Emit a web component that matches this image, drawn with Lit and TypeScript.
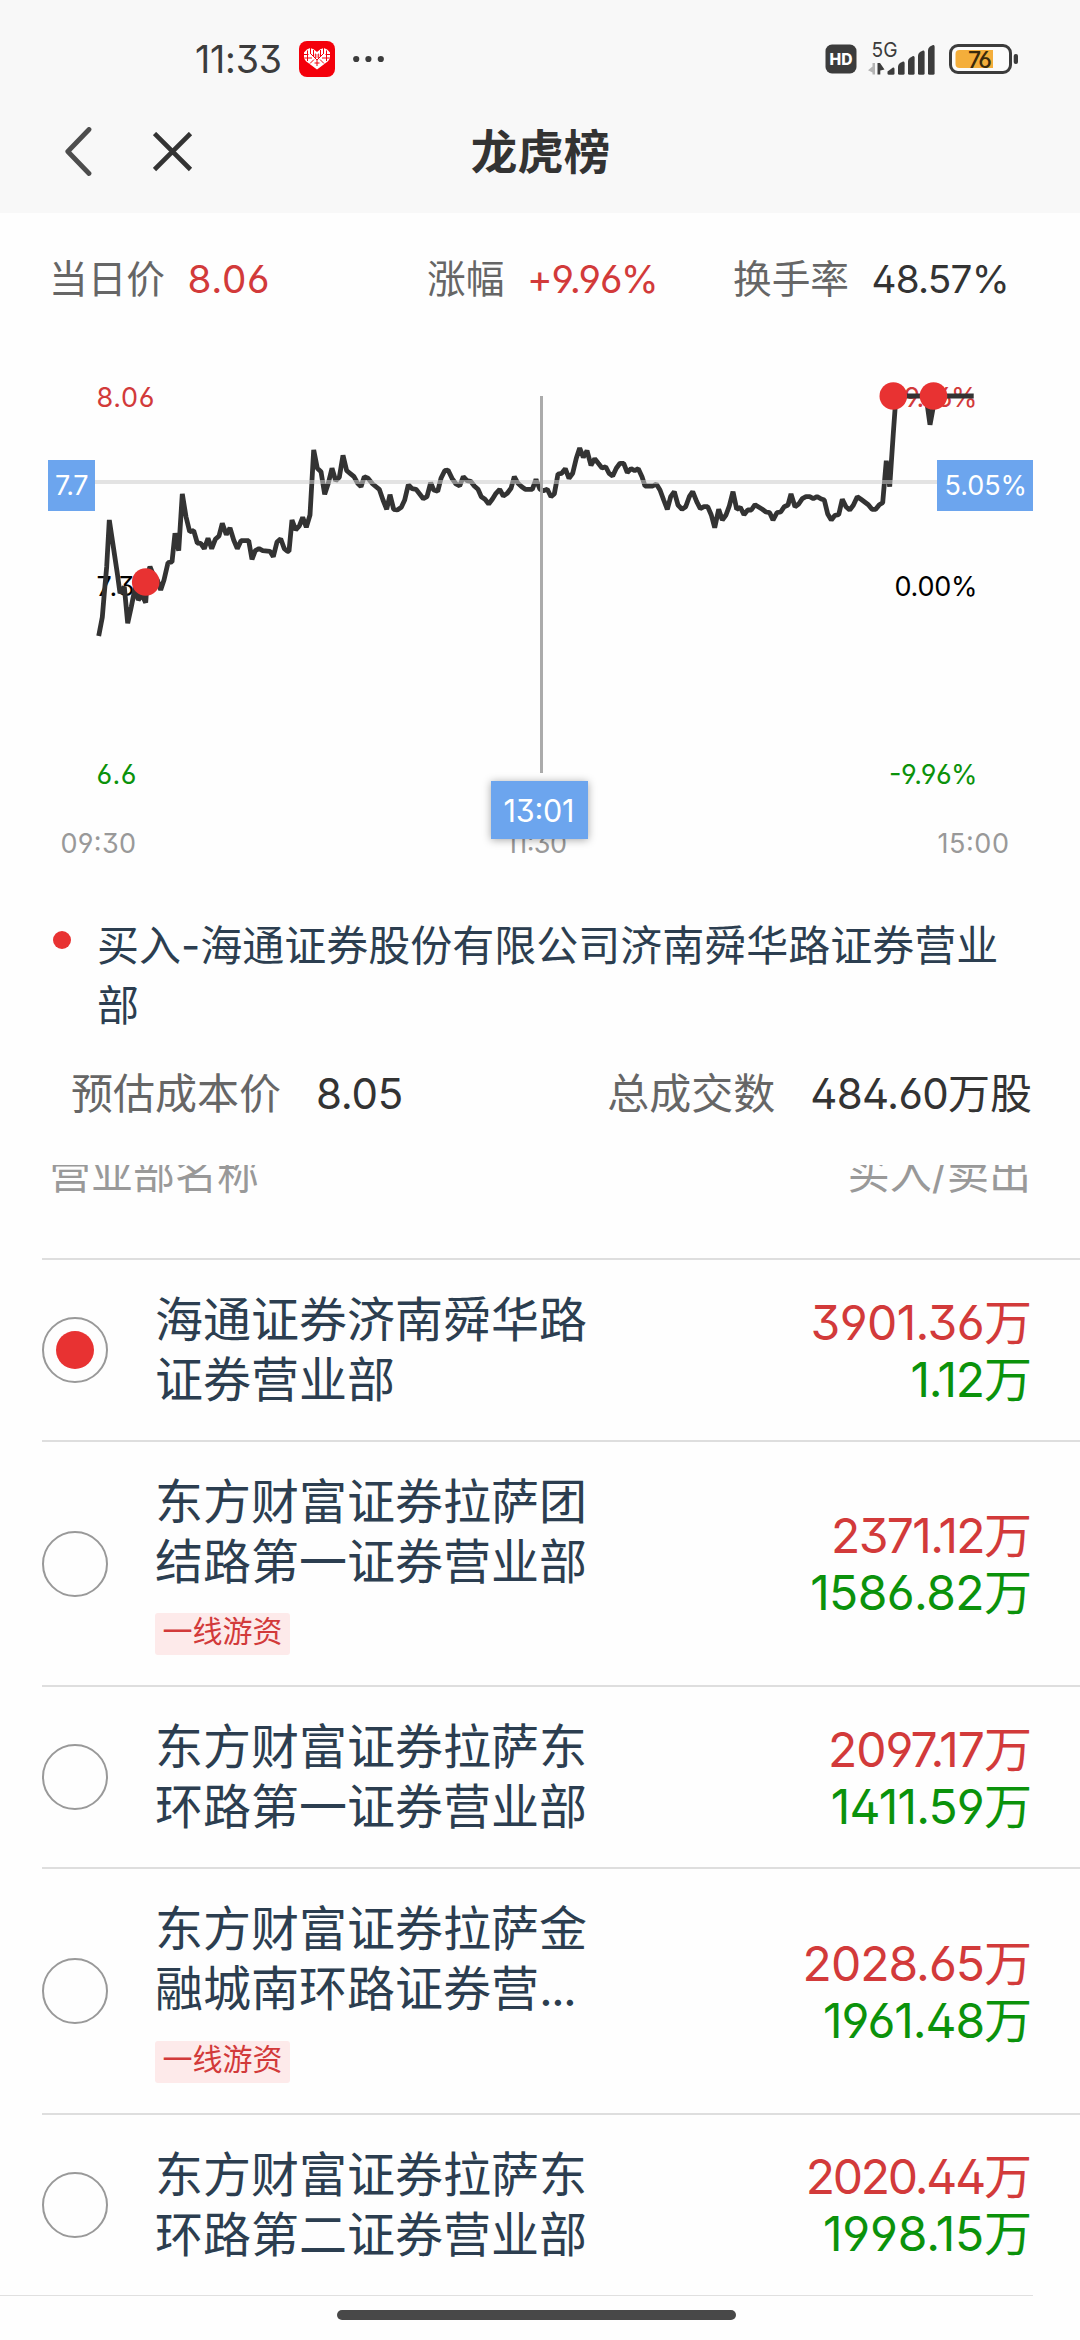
import { LitElement, html, css, svg, nothing } from "lit";
import { customElement, property } from "lit/decorators.js";

interface Amount {
  value: string;
  tracking: number;
}

interface Seat {
  name: string;
  tag?: string;
  buy: Amount;
  sell: Amount;
  selected?: boolean;
  clipped?: boolean;
}

const amount = (value: string, tracking: number): Amount => ({ value, tracking });

const SEATS: Seat[] = [
  { name: "海通证券济南舜华路证券营业部", buy: amount("3901.36", -0.6), sell: amount("1.12", -1.1), selected: true },
  { name: "东方财富证券拉萨团结路第一证券营业部", tag: "一线游资", buy: amount("2371.12", -1.6), sell: amount("1586.82", -0.6) },
  { name: "东方财富证券拉萨东环路第一证券营业部", buy: amount("2097.17", -1), sell: amount("1411.59", -0.8) },
  { name: "东方财富证券拉萨金融城南环路证券营", clipped: true, tag: "一线游资", buy: amount("2028.65", -1), sell: amount("1961.48", -1.1) },
  { name: "东方财富证券拉萨东环路第二证券营业部", buy: amount("2020.44", -2.2), sell: amount("1998.15", -0.2) },
];

// Intraday series in thirds of a pixel, relative to (30, 360), one list per time segment.
const MORNING =
  "206,828 217,772 223,700 230,620 238,480 250,560 262,640 270,700 283,680 293,790 304,740 316,680 325,720 336,705 347,728 353,640 360,620 372,650 382,660 392,690 402,660 414,608 426,606 435,520 446,572 457,402 468,470 479,515 491,512 502,549 512,550 523,566 534,535 545,566 556,538 567,528 577,490 589,524 600,504 611,540 622,566 633,542 656,542 666,598 676,572 687,566 698,572 720,574 730,590 741,546 752,536 763,566 772,574 777,574 786,480 797,510 808,498 818,472 829,502 840,465 851,270 862,325 873,335 884,403 895,370 906,325 917,362 928,352 939,286 950,332 960,340 972,350 983,370 993,380";
const MIDDAY =
  "43,350 54,355 68,372 88,388 99,420 110,448 120,404 131,448 142,450 154,442 164,420 175,374 186,386 198,388 209,402 220,416 231,410 242,368 251,390 263,394 273,355 284,332 294,330 306,355 318,372 329,378 340,350 351,362 362,364 373,378 384,388 394,410 405,418 416,432 427,418 438,400 449,388 460,408 472,400 483,385 493,350 504,370 515,380 526,388 547,388 558,358 570,388 580,392 592,388 603,410 613,402 624,342 635,340 646,326 657,355 668,340 679,295 689,264 700,292 711,272 723,316 734,296 745,310 756,324 767,320 777,340 788,348 799,325 810,310 821,310 832,338 843,326 854,332 865,326 876,350 885,378 908,378 919,372";
const AFTERNOON =
  "0,390 11,420 22,448 32,410 43,395 54,435 66,448 77,440 88,410 98,395 110,425 121,446 132,440 143,440 154,465 164,503 176,448 187,480 198,465 208,438 219,395 230,448 241,442 252,464 263,450 274,450 285,434 307,448 318,456 329,458 339,480 351,458 362,456 373,440 384,435 393,402 405,440 416,432 427,416 438,410 449,410 460,416 471,410 482,416 493,420 503,462 514,480 525,466 536,464 547,418 558,440 569,450 580,436 592,410 603,418 625,434 636,448 647,448 658,434 668,428 679,302 689,380 700,220 708,108 798,108 810,194 826,108 941,108";

const project = (points: string, shift: number) =>
  points
    .split(" ")
    .map((p) => {
      const [x, y] = p.split(",").map(Number);
      return `${(30 + (x + shift) / 3).toFixed(1)},${(360 + y / 3).toFixed(1)}`;
    })
    .join(" ");

const LINE = [project(MORNING, 0), project(MIDDAY, 960), project(AFTERNOON, 1890)].join(" ");

const FONT = css`Inter, "Noto Sans CJK SC", sans-serif`;

@customElement("status-bar")
export class StatusBar extends LitElement {
  static styles = css`
    :host { display: flex; align-items: center; justify-content: space-between; height: 118px; padding: 0 61px 0 195px; color: #3c3c3c; }
    .left { display: flex; align-items: center; }
    .time { width: 104px; font-size: 37.500px; line-height: 44px; letter-spacing: -0.200px; padding-top: 1px; }
    .app { margin-right: 18px; }
    svg { display: block; }
    .hd { font: 800 15.500px Inter, sans-serif; }
    .net { font: 400 20.500px Inter, sans-serif; }
    .level { font: 500 23px Inter, sans-serif; letter-spacing: -1.400px; font-feature-settings: "ss01"; }
  `;
  render() {
    return html`
      <div class="left">
        <span class="time">11:33</span>
        <svg class="app" width="36" height="36" viewBox="0 0 36 36">
          <rect width="36" height="36" rx="8" fill="#f4000b" />
          <path fill="#fff" d="M18 28.6L7 20.2Q5 18.4 5 15.6V11.4Q7.6 7.6 11.2 7Q14.6 7.6 18 11Q21.400 7.600 24.800 7Q28.400 7.600 31 11.400V15.600Q31 18.400 29 20.200Z" />
          <g fill="none" stroke="#f4000b" stroke-width="1">
            <path d="M8.500 9.500V20M11.500 7V13M14.500 9V16M21.500 9V16M24.500 7V13M27.500 9.500V20M5 13.500H9.500M26.500 13.500H31M5.500 17H13M23 17H30.500M12 13L18 19L24 13M11 22.500L15 18.500M25 22.500L21 18.500M15.500 22H20.500M18 19V25" />
            <path d="M16.500 12.500V17M19.500 12.500V17M15.500 14H20.500M15.500 16H20.500" stroke-width=".7" />
          </g>
        </svg>
        <svg width="32" height="8" viewBox="0 0 32 8" fill="#3c3c3c">
          <circle cx="3.200" cy="4" r="3.100" /><circle cx="15.400" cy="4" r="3.100" /><circle cx="27.800" cy="4" r="3.100" />
        </svg>
      </div>
      <svg width="194" height="48" viewBox="825 35 194 48" fill="#3c3c3c">
        <rect x="825.500" y="44.500" width="31" height="29" rx="6.500" />
        <text class="hd" x="841" y="64.700" text-anchor="middle" textLength="23" lengthAdjust="spacingAndGlyphs" fill="#fff">HD</text>
        <text class="net" x="871.500" y="57" textLength="26" lengthAdjust="spacingAndGlyphs">5G</text>
        <path d="M872.500 63V74.500H875V63ZM872.500 66.500L868 70.200L872.500 72.500Z" fill="#b4b4b4" />
        <path d="M877.500 63V74.500H880.300V70.500L884.500 69.500L880 63Z" />
        <path d="M887.500 71.500L893 67.500Q894.500 67 894.500 69V73.500Q894.500 74.700 893 74.700H889Q887.500 74.700 887.500 73.500Z" />
        <path d="M898 66.500Q898 64.500 900 63L903 61.500Q904.600 61 904.600 63V73.500Q904.600 74.700 903 74.700H899.500Q898 74.700 898 73.500Z" />
        <path d="M908 61Q908 59 910 57.700L913 56Q914.600 55.600 914.600 57.500V73.500Q914.600 74.700 913 74.700H909.500Q908 74.700 908 73.500Z" />
        <path d="M918 55.500Q918 53.500 920 52L923 50.500Q924.600 50 924.600 52V73.500Q924.600 74.700 923 74.700H919.500Q918 74.700 918 73.500Z" />
        <path d="M928 50Q928 48 930 46.500L933 45Q934.600 44.500 934.600 46.500V73.500Q934.600 74.700 933 74.700H929.500Q928 74.700 928 73.500Z" />
        <rect x="950.500" y="45.500" width="60" height="27" rx="7.500" fill="#fbfbfb" stroke="#3c3c3c" stroke-width="3" />
        <path d="M959.500 50H993V68H959.500Q955.500 68 955.500 64V54Q955.500 50 959.500 50Z" fill="#f4ae3b" />
        <text class="level" x="968" y="67.500" fill="#3a2a0c">76</text>
        <rect x="1013.700" y="54" width="4.300" height="10" rx="2" />
      </svg>
    `;
  }
}

@customElement("nav-bar")
export class NavBar extends LitElement {
  static styles = css`
    :host { display: grid; grid-template-columns: 1fr auto 1fr; align-items: center; height: 67px; padding: 0 0 28px; }
    .actions { display: flex; align-items: center; gap: 59px; padding-left: 64px; }
    svg { display: block; fill: none; }
    .back { stroke-linecap: round; stroke-linejoin: round; }
    .title { font-family: ${FONT}; font-size: 46.500px; line-height: 60px; font-weight: 700; color: #333; padding-left: 1px; }
  `;
  render() {
    return html`
      <div class="actions">
        <svg class="back" width="30" height="50" viewBox="0 0 30 50" stroke="#4d4d4d" stroke-width="4.800"><path d="M25 2.500L3.800 24.500L25 46.500" /></svg>
        <svg width="40" height="40" viewBox="0 0 40 40" stroke="#333" stroke-width="4.600"><path d="M1.500 1.500L37.500 37.500M37.500 1.500L1.500 37.500" /></svg>
      </div>
      <div class="title">龙虎榜</div>
    `;
  }
}

@customElement("price-chart")
export class PriceChart extends LitElement {
  static styles = css`
    :host { display: block; }
    svg { display: block; font-family: ${FONT}; font-feature-settings: "ss01"; font-size: 27px; }
    .up { fill: #d23a3a; }
    .down { fill: #0b920b; }
    .time { fill: #999; }
    .cursor { fill: #fff; }
    .cursor-time { fill: #fff; font-size: 30.500px; }
    .badge { fill: #6ca5ee; }
    .float { filter: drop-shadow(0 1px 4px rgba(0, 0, 0, 0.35)); }
  `;
  private label(cls: string, x: number, y: number, width: number, text: string) {
    return svg`<text class=${cls} x=${x} y=${y} textLength=${width}>${text}</text>`;
  }
  render() {
    return html`
      <svg width="1080" height="547" viewBox="0 343 1080 547">
        ${this.label("up", 96.5, 407, 58, "8.06")}
        ${this.label("base", 96.5, 596, 56, "7.33")}
        ${this.label("down", 96.5, 784, 40, "6.6")}
        ${this.label("up", 904, 407, 73.5, "9.96%")}
        ${this.label("base", 894.5, 596, 83, "0.00%")}
        ${this.label("down", 889, 784, 88.5, "-9.96%")}
        ${this.label("time", 60.5, 853, 75.5, "09:30")}
        ${this.label("time", 506, 853, 61, "11:30")}
        ${this.label("time", 937.5, 853, 71.5, "15:00")}
        <polyline points=${LINE} fill="none" stroke="#333" stroke-width="4.800" stroke-linejoin="bevel" />
        <rect x="95" y="480" width="842" height="4" fill="#ccc" opacity=".55" />
        <rect x="540" y="396" width="3" height="377" fill="#a6a6a6" opacity=".95" />
        <circle cx="145.700" cy="582" r="13.800" fill="#e83232" />
        <circle cx="893.300" cy="396" r="13.800" fill="#e83232" />
        <circle cx="933.500" cy="396" r="13.800" fill="#e83232" />
        <rect class="badge" x="48" y="460" width="47" height="51" />
        <rect class="badge" x="937" y="460" width="96" height="51" />
        <rect class="badge float" x="491" y="781" width="97" height="58" />
        ${this.label("cursor", 55, 495, 33.5, "7.7")}
        ${this.label("cursor", 944.5, 495, 82.5, "5.05%")}
        ${this.label("cursor-time", 503.5, 822, 71, "13:01")}
      </svg>
    `;
  }
}

@customElement("seat-row")
export class SeatRow extends LitElement {
  @property({ attribute: false }) seat!: Seat;
  static styles = css`
    :host { display: flex; align-items: center; margin-left: 42px; padding: 30px 48px 30px 0; border-top: 2px solid #dedede; }
    .radio { box-sizing: border-box; width: 66px; height: 66px; border: 2px solid #999; border-radius: 50%; display: flex; align-items: center; justify-content: center; }
    .on { width: 38px; height: 38px; border-radius: 50%; background: #e83232; }
    .info { width: 434px; margin-left: 47px; }
    .name { font-size: 48px; line-height: 60px; color: #2c3e50; word-break: break-all; }
    .more { letter-spacing: -1.800px; }
    .tag { display: block; width: max-content; margin-top: 21.400px; padding: 0 7.500px; height: 42px; font-size: 30px; line-height: 37.500px; color: #d23a3a; background: #fdeaea; border-radius: 3px; }
    .amounts { flex: 1; text-align: right; font-size: 48px; line-height: 57px; padding-top: 1px; }
    .buy { color: #d23a3a; }
    .sell { color: #0b920b; }
  `;
  private amount(cls: string, a: Amount) {
    return html`<div class=${cls}><span style=${`letter-spacing:${a.tracking}px`}>${a.value}</span>万</div>`;
  }
  render() {
    const s = this.seat;
    return html`
      <div class="radio">${s.selected ? html`<div class="on"></div>` : nothing}</div>
      <div class="info">
        <div class="name">${s.name}${s.clipped ? html`<span class="more">...</span>` : nothing}</div>
        ${s.tag ? html`<span class="tag">${s.tag}</span>` : nothing}
      </div>
      <div class="amounts">
        ${this.amount("buy", s.buy)}
        ${this.amount("sell", s.sell)}
      </div>
    `;
  }
}

@customElement("app-root")
export class AppRoot extends LitElement {
  static styles = css`
    :host { display: flex; flex-direction: column; width: 1080px; height: 2340px; overflow: hidden; background: #fefefe; font-family: ${FONT}; font-feature-settings: "ss01"; color: #333; }
    .top { background: #f8f8f8; height: 213px; }
    .stats { display: grid; box-sizing: border-box; grid-template-columns: 378px 306px 1fr; align-items: center; height: 130px; padding: 2px 0 0 49px; font-size: 38.700px; line-height: 50px; }
    .stat { display: flex; gap: 22.500px; }
    .label { color: #666; }
    .red { color: #d23a3a; }
    .wide { letter-spacing: 0.600px; }
    .tight { letter-spacing: -0.400px; }
    .snug { letter-spacing: -0.800px; }
    .picked { display: flex; padding: 26px 48px 0 52.500px; font-size: 42px; line-height: 60px; color: #2c3e50; }
    .dot { flex: none; width: 18px; height: 18px; margin: 15px 26.500px 0 0; border-radius: 50%; background: #e83232; }
    .cost { display: flex; box-sizing: border-box; align-items: center; justify-content: space-between; height: 112px; padding: 3px 48px 0 71px; font-size: 42px; line-height: 60px; }
    .pair { display: flex; gap: 35px; }
    .price { letter-spacing: -0.300px; }
    .volume { letter-spacing: -0.700px; }
    .head { margin-top: 17px; height: 93px; overflow: hidden; }
    .head-row { display: flex; justify-content: space-between; margin-top: -16px; padding: 0 49px; font-size: 42px; line-height: 50px; color: #999; }
    .end { width: 1033px; height: 1px; background: #e0e0e0; }
    .home { width: 399px; height: 10px; margin: 14px 0 0 337px; border-radius: 5px; background: #484848; }
  `;
  render() {
    return html`
      <div class="top">
        <status-bar></status-bar>
        <nav-bar></nav-bar>
      </div>
      <div class="stats">
        <div class="stat"><span class="label">当日价</span><span class="red wide">8.06</span></div>
        <div class="stat"><span class="label">涨幅</span><span class="red tight">+9.96%</span></div>
        <div class="stat"><span class="label">换手率</span><span class="snug">48.57%</span></div>
      </div>
      <price-chart></price-chart>
      <div class="picked"><i class="dot"></i><span>买入-海通证券股份有限公司济南舜华路证券营业部</span></div>
      <div class="cost">
        <div class="pair"><span class="label">预估成本价</span><span class="price">8.05</span></div>
        <div class="pair"><span class="label">总成交数</span><span><span class="volume">484.60</span>万股</span></div>
      </div>
      <div class="head"><div class="head-row"><span>营业部名称</span><span>买入/卖出</span></div></div>
      ${SEATS.map((s) => html`<seat-row .seat=${s}></seat-row>`)}
      <div class="end"></div>
      <div class="home"></div>
    `;
  }
}
